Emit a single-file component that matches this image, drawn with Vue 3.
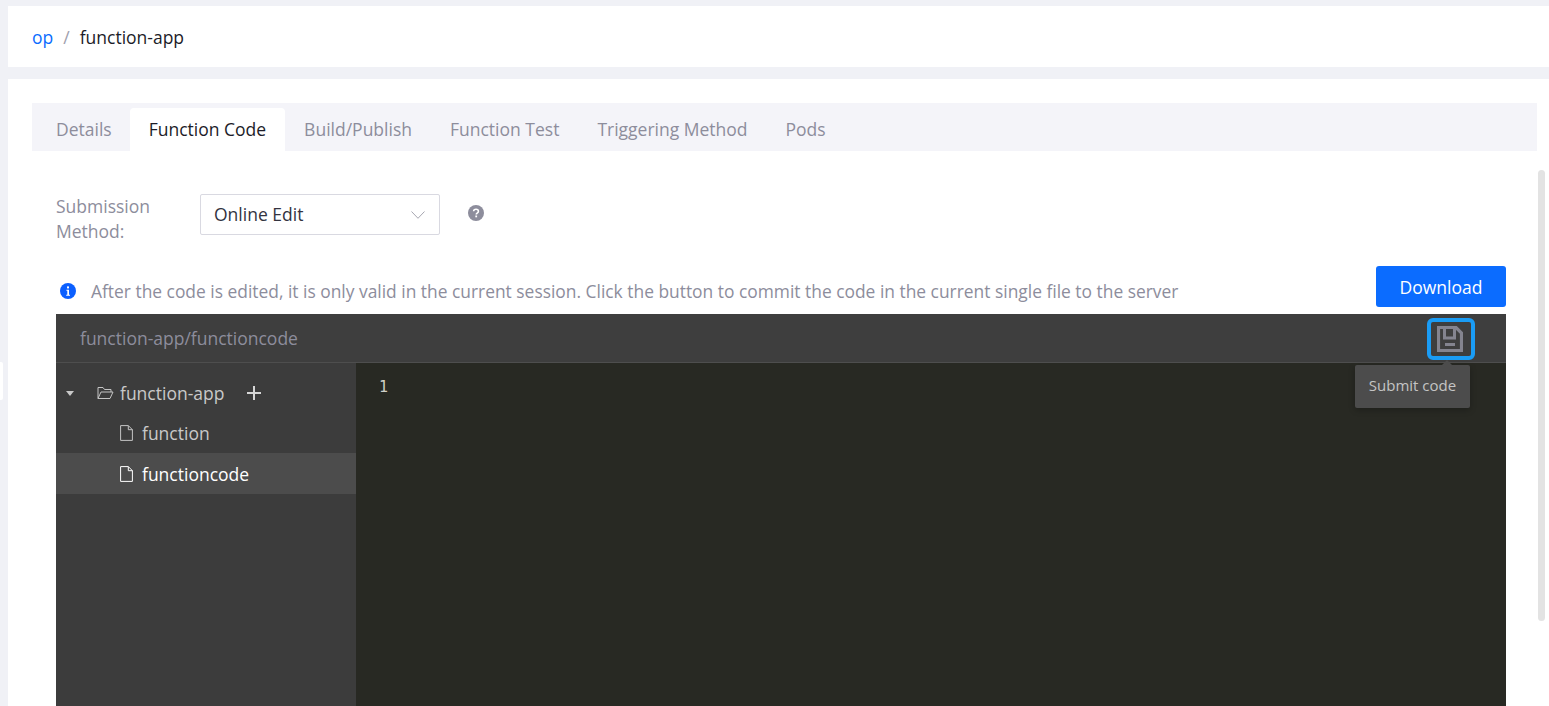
<script setup>
const tabs = ['Details', 'Function Code', 'Build/Publish', 'Function Test', 'Triggering Method', 'Pods']
</script>

<template>
  <div class="page">
    <div class="handle"></div>
    <header class="crumb">
      <span class="crumb-link">op</span>
      <span class="crumb-sep">/</span>
      <span class="crumb-cur">function-app</span>
    </header>
    <main class="panel">
      <nav class="tabs">
        <span v-for="t in tabs" :key="t" class="tab" :class="{ active: t === 'Function Code' }">{{ t }}</span>
      </nav>
      <div class="scrollbar"></div>
      <section class="body">
        <div class="form-row">
          <label class="form-label">Submission Method:</label>
          <div class="select">
            <span class="select-value">Online Edit</span>
            <svg width="14" height="8" viewBox="0 0 14 8" fill="none"><path d="M.5.5 7 7.300 13.500.5" stroke="#a6a6b0" stroke-width="1"/></svg>
          </div>
          <svg class="help" width="16" height="16" viewBox="0 0 16 16">
            <circle cx="8" cy="8" r="8" fill="#8d8d9c"/>
            <path d="M5.600 6.200C5.700 4.900 6.700 4.200 8 4.200c1.400 0 2.400.8 2.400 2 0 1-.6 1.500-1.300 2-.5.3-.8.6-.8 1.200" fill="none" stroke="#fff" stroke-width="1.600"/>
            <rect x="7.300" y="10.500" width="1.800" height="1.800" fill="#fff"/>
          </svg>
        </div>
        <div class="notice-row">
          <div class="notice">
            <svg width="16" height="16" viewBox="0 0 16 16">
              <circle cx="8" cy="8" r="8" fill="#0b5fff"/>
              <rect x="7" y="3.400" width="2" height="2" fill="#fff"/>
              <path d="M6.400 6.700H9v5h1v1.100H6.200v-1.100h1.100V7.800h-.9z" fill="#fff"/>
            </svg>
            <span>After the code is edited, it is only valid in the current session. Click the button to commit the code in the current single file to the server</span>
          </div>
          <button class="download">Download</button>
        </div>
        <div class="editor">
          <div class="editor-head">
            <span class="path">function-app/functioncode</span>
            <div class="save">
              <svg width="26" height="26" viewBox="0 0 26 26" fill="none">
                <path d="M1.500 1.500H19L24.500 7V24.500H1.500z" stroke="#84848f" stroke-width="3.200"/>
                <path d="M7.500 2V12H17.500V2" stroke="#84848f" stroke-width="3"/>
                <path d="M8 18.500H18" stroke="#84848f" stroke-width="3"/>
              </svg>
              <div class="tooltip">Submit code</div>
            </div>
          </div>
          <div class="editor-main">
            <aside class="tree">
              <div class="tree-root">
                <svg class="caret" width="8" height="5" viewBox="0 0 8 5"><path d="M0 0h8L4 5z" fill="#c9c9c9"/></svg>
                <svg class="folder" width="17" height="14" viewBox="0 0 17 14" fill="none">
                  <path d="M1 12.500V1.500h5l1.500 2H14v2.500M1 12.500h12l3-6.500H4z" stroke="#c4c4c4" stroke-width="1"/>
                </svg>
                <span>function-app</span>
                <svg class="plus" width="14" height="14" viewBox="0 0 14 14"><path d="M7 0v14M0 7h14" stroke="#d6d6d6" stroke-width="2"/></svg>
              </div>
              <div class="tree-file">
                <svg width="13" height="16" viewBox="0 0 13 16" fill="none"><path d="M.6.600h7.700l4.100 4.100v10.700H.6zM8.300.6v4.100h4.100" stroke="#c4c4c4" stroke-width="1"/></svg>
                <span>function</span>
              </div>
              <div class="tree-file selected">
                <svg width="13" height="16" viewBox="0 0 13 16" fill="none"><path d="M.6.600h7.700l4.100 4.100v10.700H.6zM8.300.6v4.100h4.100" stroke="#fff" stroke-width="1"/></svg>
                <span>functioncode</span>
              </div>
            </aside>
            <div class="code">
              <div class="line-no">1</div>
            </div>
          </div>
        </div>
      </section>
    </main>
  </div>
</template>

<style>
html, body { margin: 0; height: 100%; overflow: hidden; background: #f0f1f6; }
</style>

<style scoped>
.page {
  position: relative;
  height: 706px;
  overflow: hidden;
  padding: 6px 0 0 8px;
  box-sizing: border-box;
  background: #f0f1f6;
  font-family: "Open Sans", "Noto Sans", sans-serif;
  font-size: 17.5px;
}
.handle {
  position: absolute;
  left: 0;
  top: 362px;
  width: 3px;
  height: 38px;
  background: #fff;
  border-radius: 0 2px 2px 0;
}
.crumb {
  height: 61px;
  padding-left: 24px;
  background: #fff;
  display: flex;
  align-items: center;
  gap: 10px;
}
.crumb-link { color: #0b6cff; }
.crumb-sep { color: #a0a0ad; }
.crumb-cur { color: #1c1c28; }
.panel {
  position: relative;
  margin-top: 12px;
  height: 640px;
  padding: 24px 12px 0 24px;
  background: #fff;
}
.tabs {
  height: 48px;
  background: #f4f4f9;
  display: flex;
  align-items: flex-end;
}
.tab {
  height: 43px;
  line-height: 43px;
  padding: 0 19px;
  color: #8d8d9c;
  border-radius: 4px 4px 0 0;
}
.tab:first-child { padding: 0 18px 0 24px; }
.tab.active { background: #fff; color: #1c1c28; }
.scrollbar {
  position: absolute;
  right: 4px;
  top: 91px;
  width: 7px;
  height: 451px;
  background: #e3e3e3;
  border-radius: 4px;
}
.body { padding: 43px 31px 0 24px; }
.form-row { display: flex; align-items: flex-start; }
.form-label {
  line-height: 25px;
  color: #8d8d9c;
  flex: none;
  width: 100px;
  margin-right: 44px;
}
.select {
  width: 240px;
  height: 41px;
  box-sizing: border-box;
  border: 1px solid #d9d9e1;
  border-radius: 2px;
  padding: 0 14px 0 13px;
  display: flex;
  align-items: center;
  justify-content: space-between;
  color: #33333f;
}
.select-value { margin-bottom: 2px; }
.help { margin: 11px 0 0 28px; }
.notice-row {
  margin-top: 22px;
  height: 48px;
  display: flex;
  justify-content: space-between;
  align-items: flex-start;
}
.notice {
  display: flex;
  align-items: center;
  gap: 15px;
  padding: 13px 0 0 4px;
  color: #8d8d9c;
  font-size: 17.4px;
  white-space: nowrap;
}
.download {
  width: 130px;
  height: 41px;
  border: 0;
  border-radius: 3px;
  background: #0b6cff;
  color: #fff;
  font: inherit;
  padding: 0;
}
.editor { height: 420px; background: #3c3c3c; }
.editor-head {
  height: 48px;
  border-bottom: 1px solid #4e4e4e;
  display: flex;
  align-items: center;
  justify-content: space-between;
  padding: 0 31px 0 24px;
  background: #3e3e3e;
}
.path { color: #8d8d9c; }
.save {
  position: relative;
  width: 48px;
  height: 42px;
  margin-top: 1px;
  padding-right: 2px;
  box-sizing: border-box;
  border: 4px solid #1a9cf5;
  border-radius: 6px;
  display: flex;
  align-items: center;
  justify-content: center;
}
.tooltip {
  position: absolute;
  top: 43px;
  left: -76px;
  width: 115px;
  height: 43px;
  line-height: 40px;
  text-align: center;
  background: #4c4c4c;
  color: #c4c4c4;
  font-size: 15px;
  border-radius: 2px;
  box-shadow: 0 2px 6px rgba(0,0,0,.25);
}
.tooltip::before {
  content: "";
  position: absolute;
  top: -5px;
  left: 87px;
  border: 5px solid transparent;
  border-top: 0;
  border-bottom-color: #4c4c4c;
}
.editor-main { display: flex; height: 372px; }
.tree { width: 300px; flex: none; background: #3c3c3c; padding-top: 10px; color: #c9c9c9; }
.tree-root { height: 40px; display: flex; align-items: center; }
.caret { margin-left: 10px; }
.folder { margin-left: 23px; margin-right: 6px; }
.plus { margin-left: 23px; }
.tree-file { height: 40px; display: flex; align-items: center; padding-left: 64px; gap: 9px; }
.tree-file.selected { height: 41px; background: #4c4c4c; color: #fff; }
.code { flex: 1; background: #282923; padding: 14px 0 0 23px; }
.line-no { color: #d0d0c8; font: 15px/20px "DejaVu Sans Mono", monospace; }
</style>
